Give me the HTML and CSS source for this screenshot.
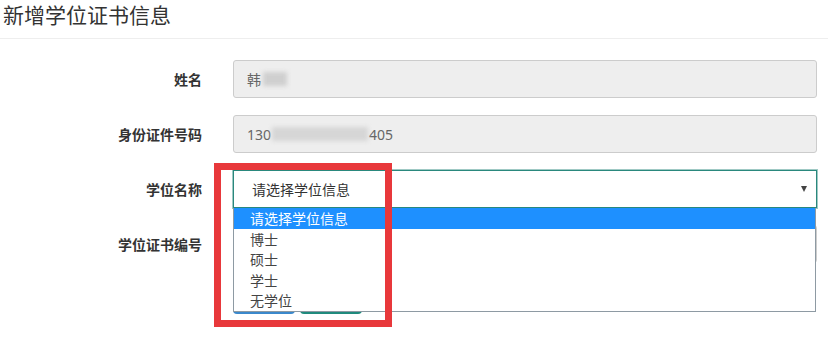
FILE: index.html
```html
<!DOCTYPE html>
<html lang="zh-CN">
<head>
<meta charset="utf-8">
<title>新增学位证书信息</title>
<link rel="stylesheet" href="styles.css">
</head>
<body>
<div class="page">
  <h1 class="title">新增学位证书信息</h1>
  <form class="form">
    <div class="row">
      <label class="label">姓名</label>
      <div class="control readonly"><span class="val">韩</span><span class="blur blur-name"></span></div>
    </div>
    <div class="row">
      <label class="label">身份证件号码</label>
      <div class="control readonly"><span class="val">130</span><span class="blur blur-id"></span><span class="val">405</span></div>
    </div>
    <div class="row">
      <label class="label">学位名称</label>
      <div class="select-wrap">
        <div class="control select"><span class="sel-text">请选择学位信息</span><span class="arrow"></span></div>
        <ul class="dropdown">
          <li class="opt active">请选择学位信息</li>
          <li class="opt">博士</li>
          <li class="opt">硕士</li>
          <li class="opt">学士</li>
          <li class="opt">无学位</li>
        </ul>
      </div>
    </div>
    <div class="row">
      <label class="label">学位证书编号</label>
      <div class="control plain"></div>
    </div>
    <div class="row buttons">
      <div class="label"></div>
      <div class="btns">
        <span class="btn btn-blue"></span>
        <span class="btn btn-teal"></span>
      </div>
    </div>
  </form>
  <div class="annot"></div>
</div>
</body>
</html>
```

FILE: styles.css
```css
html, body {
  margin: 0;
  padding: 0;
  background: #fff;
}
body {
  width: 828px;
  height: 346px;
  overflow: hidden;
  font-family: "Noto Sans CJK SC", "Noto Sans", sans-serif;
  color: #333;
}
.page {
  position: relative;
  height: 346px;
}
.title {
  margin: 0;
  height: 38px;
  padding-left: 3px;
  font-size: 21px;
  font-weight: normal;
  line-height: 29px;
  color: #333;
  border-bottom: 1px solid #eee;
}
.form {
  padding-top: 21px;
}
.row {
  display: flex;
  align-items: center;
  height: 38px;
  margin-bottom: 17px;
}
.label {
  width: 202px;
  flex: 0 0 202px;
  margin-right: 31px;
  text-align: right;
  font-size: 14px;
  font-weight: bold;
  color: #333;
}
.control {
  box-sizing: border-box;
  width: 584px;
  height: 38px;
  border: 1px solid #ccc;
  border-radius: 3px;
  display: flex;
  align-items: center;
  padding-left: 13px;
  font-size: 14px;
  color: #666;
}
.readonly {
  background: #eee;
}
.val {
  font-family: "Noto Sans", "Noto Sans CJK SC", sans-serif;
}
.blur {
  display: inline-block;
  height: 14px;
  background: #d6d6d6;
  filter: blur(2px);
}
.blur-name {
  width: 24px;
  margin-left: 2px;
  background: #cfcfcf;
}
.blur-id {
  width: 96px;
  margin: 0 1px;
}
.plain {
  background: #fff;
}
.select-wrap {
  position: relative;
  width: 584px;
}
.select {
  background: #fff;
  border: 1px solid #2a887d;
  box-shadow: 0 0 0 1px rgba(42, 136, 125, 0.45);
  border-radius: 0;
  padding-left: 18px;
  justify-content: space-between;
  color: #333;
}
.arrow {
  width: 0;
  height: 0;
  margin-right: 9px;
  border-left: 3.5px solid transparent;
  border-right: 3.5px solid transparent;
  border-top: 6px solid #444;
}
.dropdown {
  position: absolute;
  left: 0;
  top: 38px;
  z-index: 2;
  box-sizing: border-box;
  width: 583px;
  margin: 0;
  padding: 0;
  list-style: none;
  background: #fff;
  border: 1px solid #8e9aa3;
  border-top: none;
}
.opt {
  height: 20.5px;
  line-height: 20.5px;
  padding-left: 16px;
  font-size: 14px;
  color: #444;
}
.opt.active {
  background: #1e90ff;
  color: #fff;
}
.buttons {
  height: 34px;
}
.btns {
  display: flex;
  gap: 5px;
}
.btn {
  display: block;
  width: 62px;
  height: 34px;
  border-radius: 4px;
}
.btn-blue {
  background: #3a88cc;
}
.btn-teal {
  background: #1f8a7d;
}
.annot {
  position: absolute;
  left: 214px;
  top: 163px;
  width: 164px;
  height: 150px;
  border: 7px solid #e8383b;
  z-index: 3;
}
```
